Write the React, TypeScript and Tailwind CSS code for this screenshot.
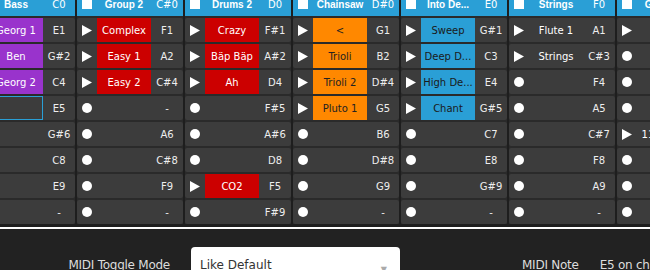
import React from 'react';

type Tone = 'purple' | 'red' | 'orange' | 'blue' | 'none';

type Slot = {
    play: boolean;
    label?: string;
    tone?: Tone;
    note: string;
    selected?: boolean;
};

type Track = {
    name: string;
    note: string;
    slots: Slot[];
};

const toneClass: Record<Tone, string> = {
    purple: 'bg-[#9933cc] text-white',
    red: 'bg-[#cc0000] text-white',
    orange: 'bg-[#ff8800] text-[#222]',
    blue: 'bg-[#2a9fd6] text-[#1a1a1a]',
    none: 'text-white',
};

const clip = (label: string, tone: Tone, note: string): Slot => ({ play: true, label, tone, note });
const empty = (note: string): Slot => ({ play: false, note });

const tracks: Track[] = [
    {
        name: 'Bass',
        note: 'C0',
        slots: [
            clip('Georg 1', 'purple', 'E1'),
            clip('Ben', 'purple', 'G#2'),
            clip('Georg 2', 'purple', 'C4'),
            { play: false, note: 'E5', selected: true },
            empty('G#6'),
            empty('C8'),
            empty('E9'),
            empty('-'),
        ],
    },
    {
        name: 'Group 2',
        note: 'C#0',
        slots: [
            clip('Complex', 'red', 'F1'),
            clip('Easy 1', 'red', 'A2'),
            clip('Easy 2', 'red', 'C#4'),
            empty('-'),
            empty('A6'),
            empty('C#8'),
            empty('F9'),
            empty('-'),
        ],
    },
    {
        name: 'Drums 2',
        note: 'D0',
        slots: [
            clip('Crazy', 'red', 'F#1'),
            clip('Bäp Bäp', 'red', 'A#2'),
            clip('Ah', 'red', 'D4'),
            empty('F#5'),
            empty('A#6'),
            empty('D8'),
            clip('CO2', 'red', 'F5'),
            empty('F#9'),
        ],
    },
    {
        name: 'Chainsaw',
        note: 'D#0',
        slots: [
            clip('<', 'orange', 'G1'),
            clip('Trioli', 'orange', 'B2'),
            clip('Trioli 2', 'orange', 'D#4'),
            clip('Pluto 1', 'orange', 'G5'),
            empty('B6'),
            empty('D#8'),
            empty('G9'),
            empty('-'),
        ],
    },
    {
        name: 'Into De...',
        note: 'E0',
        slots: [
            clip('Sweep', 'blue', 'G#1'),
            clip('Deep D...', 'blue', 'C3'),
            clip('High De...', 'blue', 'E4'),
            clip('Chant', 'blue', 'G#5'),
            empty('C7'),
            empty('E8'),
            empty('G#9'),
            empty('-'),
        ],
    },
    {
        name: 'Strings',
        note: 'F0',
        slots: [
            clip('Flute 1', 'none', 'A1'),
            clip('Strings', 'none', 'C#3'),
            empty('F4'),
            empty('A5'),
            empty('C#7'),
            empty('F8'),
            empty('A9'),
            empty('-'),
        ],
    },
    {
        name: 'Group 3',
        note: 'F#0',
        slots: [
            clip('Pad', 'none', 'A#1'),
            empty('D3'),
            empty('F#4'),
            empty('A#5'),
            clip('11 Synth', 'none', 'D7'),
            empty('F#8'),
            empty('A#9'),
            empty('-'),
        ],
    },
];

function PlayIcon() {
    return (
        <svg width="10" height="11" viewBox="0 0 10 11" className="block">
            <polygon points="0,0 10,5.5 0,11" fill="#fff" />
        </svg>
    );
}

function SlotRow({ slot }: { slot: Slot }) {
    const tone = slot.tone ?? 'none';
    return (
        <div className="flex h-[24px] overflow-hidden rounded-[2px] bg-[#3c3c3c] text-[10px] leading-none">
            <div className="flex w-[20px] shrink-0 items-center pl-[5px]">
                {slot.play ? <PlayIcon /> : <div className="h-[10px] w-[10px] rounded-full bg-white" />}
            </div>
            <div
                className={`flex w-[54px] shrink-0 items-center justify-center whitespace-nowrap pt-[1px] ${
                    slot.label ? toneClass[tone] : ''
                } ${slot.selected ? 'border border-[#2a9fd6]' : ''}`}
            >
                {slot.label}
            </div>
            <div className="flex w-[32px] shrink-0 items-center justify-center pt-[1px] text-[#eee]">{slot.note}</div>
        </div>
    );
}

function TrackColumn({ track }: { track: Track }) {
    return (
        <div className="flex w-[106px] shrink-0 flex-col gap-[2px] bg-[#2a2a2a]">
            <div className="flex h-[24px] items-center bg-[#2a9fd6] text-white">
                <div className="flex w-[20px] shrink-0 pl-[5px]">
                    <div className="h-[10px] w-[10px] bg-white" />
                </div>
                <div className="w-[54px] shrink-0 whitespace-nowrap text-center font-['Liberation_Sans',sans-serif] text-[10px] font-bold">
                    {track.name}
                </div>
                <div className="w-[32px] shrink-0 text-center text-[10px]">{track.note}</div>
            </div>
            {track.slots.map((slot, i) => (
                <SlotRow key={i} slot={slot} />
            ))}
        </div>
    );
}

export default function App() {
    return (
        <div className="h-[270px] w-[650px] overflow-hidden bg-[#1e1e1e] font-['DejaVu_Sans',sans-serif]">
            {/* launcher grid, scrolled a little right and down */}
            <div className="h-[227px] overflow-hidden">
                <div className="ml-[-31px] mt-[-8px] flex gap-[2px]">
                    {tracks.map((t) => (
                        <TrackColumn key={t.name} track={t} />
                    ))}
                </div>
            </div>

            <div className="flex h-[43px] items-start gap-[21px] border-t-2 border-white bg-[#222] pt-[18px] text-[12px] leading-[14px] tracking-[-0.25px] text-[#ddd]">
                <div className="w-[170px] shrink-0 whitespace-nowrap pt-[11px] text-right">MIDI Toggle Mode</div>
                <div className="relative h-[40px] w-[209px] shrink-0 rounded-t-[4px] bg-white pl-[9px] pt-[11px] tracking-normal text-[#333]">
                    Like Default
                    <span className="absolute right-[13px] top-[16px] text-[8px] text-[#aaa]">▼</span>
                </div>
                <div className="ml-[101px] shrink-0 whitespace-nowrap pt-[11px]">MIDI Note</div>
                <div className="shrink-0 whitespace-nowrap pt-[11px]">E5 on channel 1</div>
            </div>
        </div>
    );
}
